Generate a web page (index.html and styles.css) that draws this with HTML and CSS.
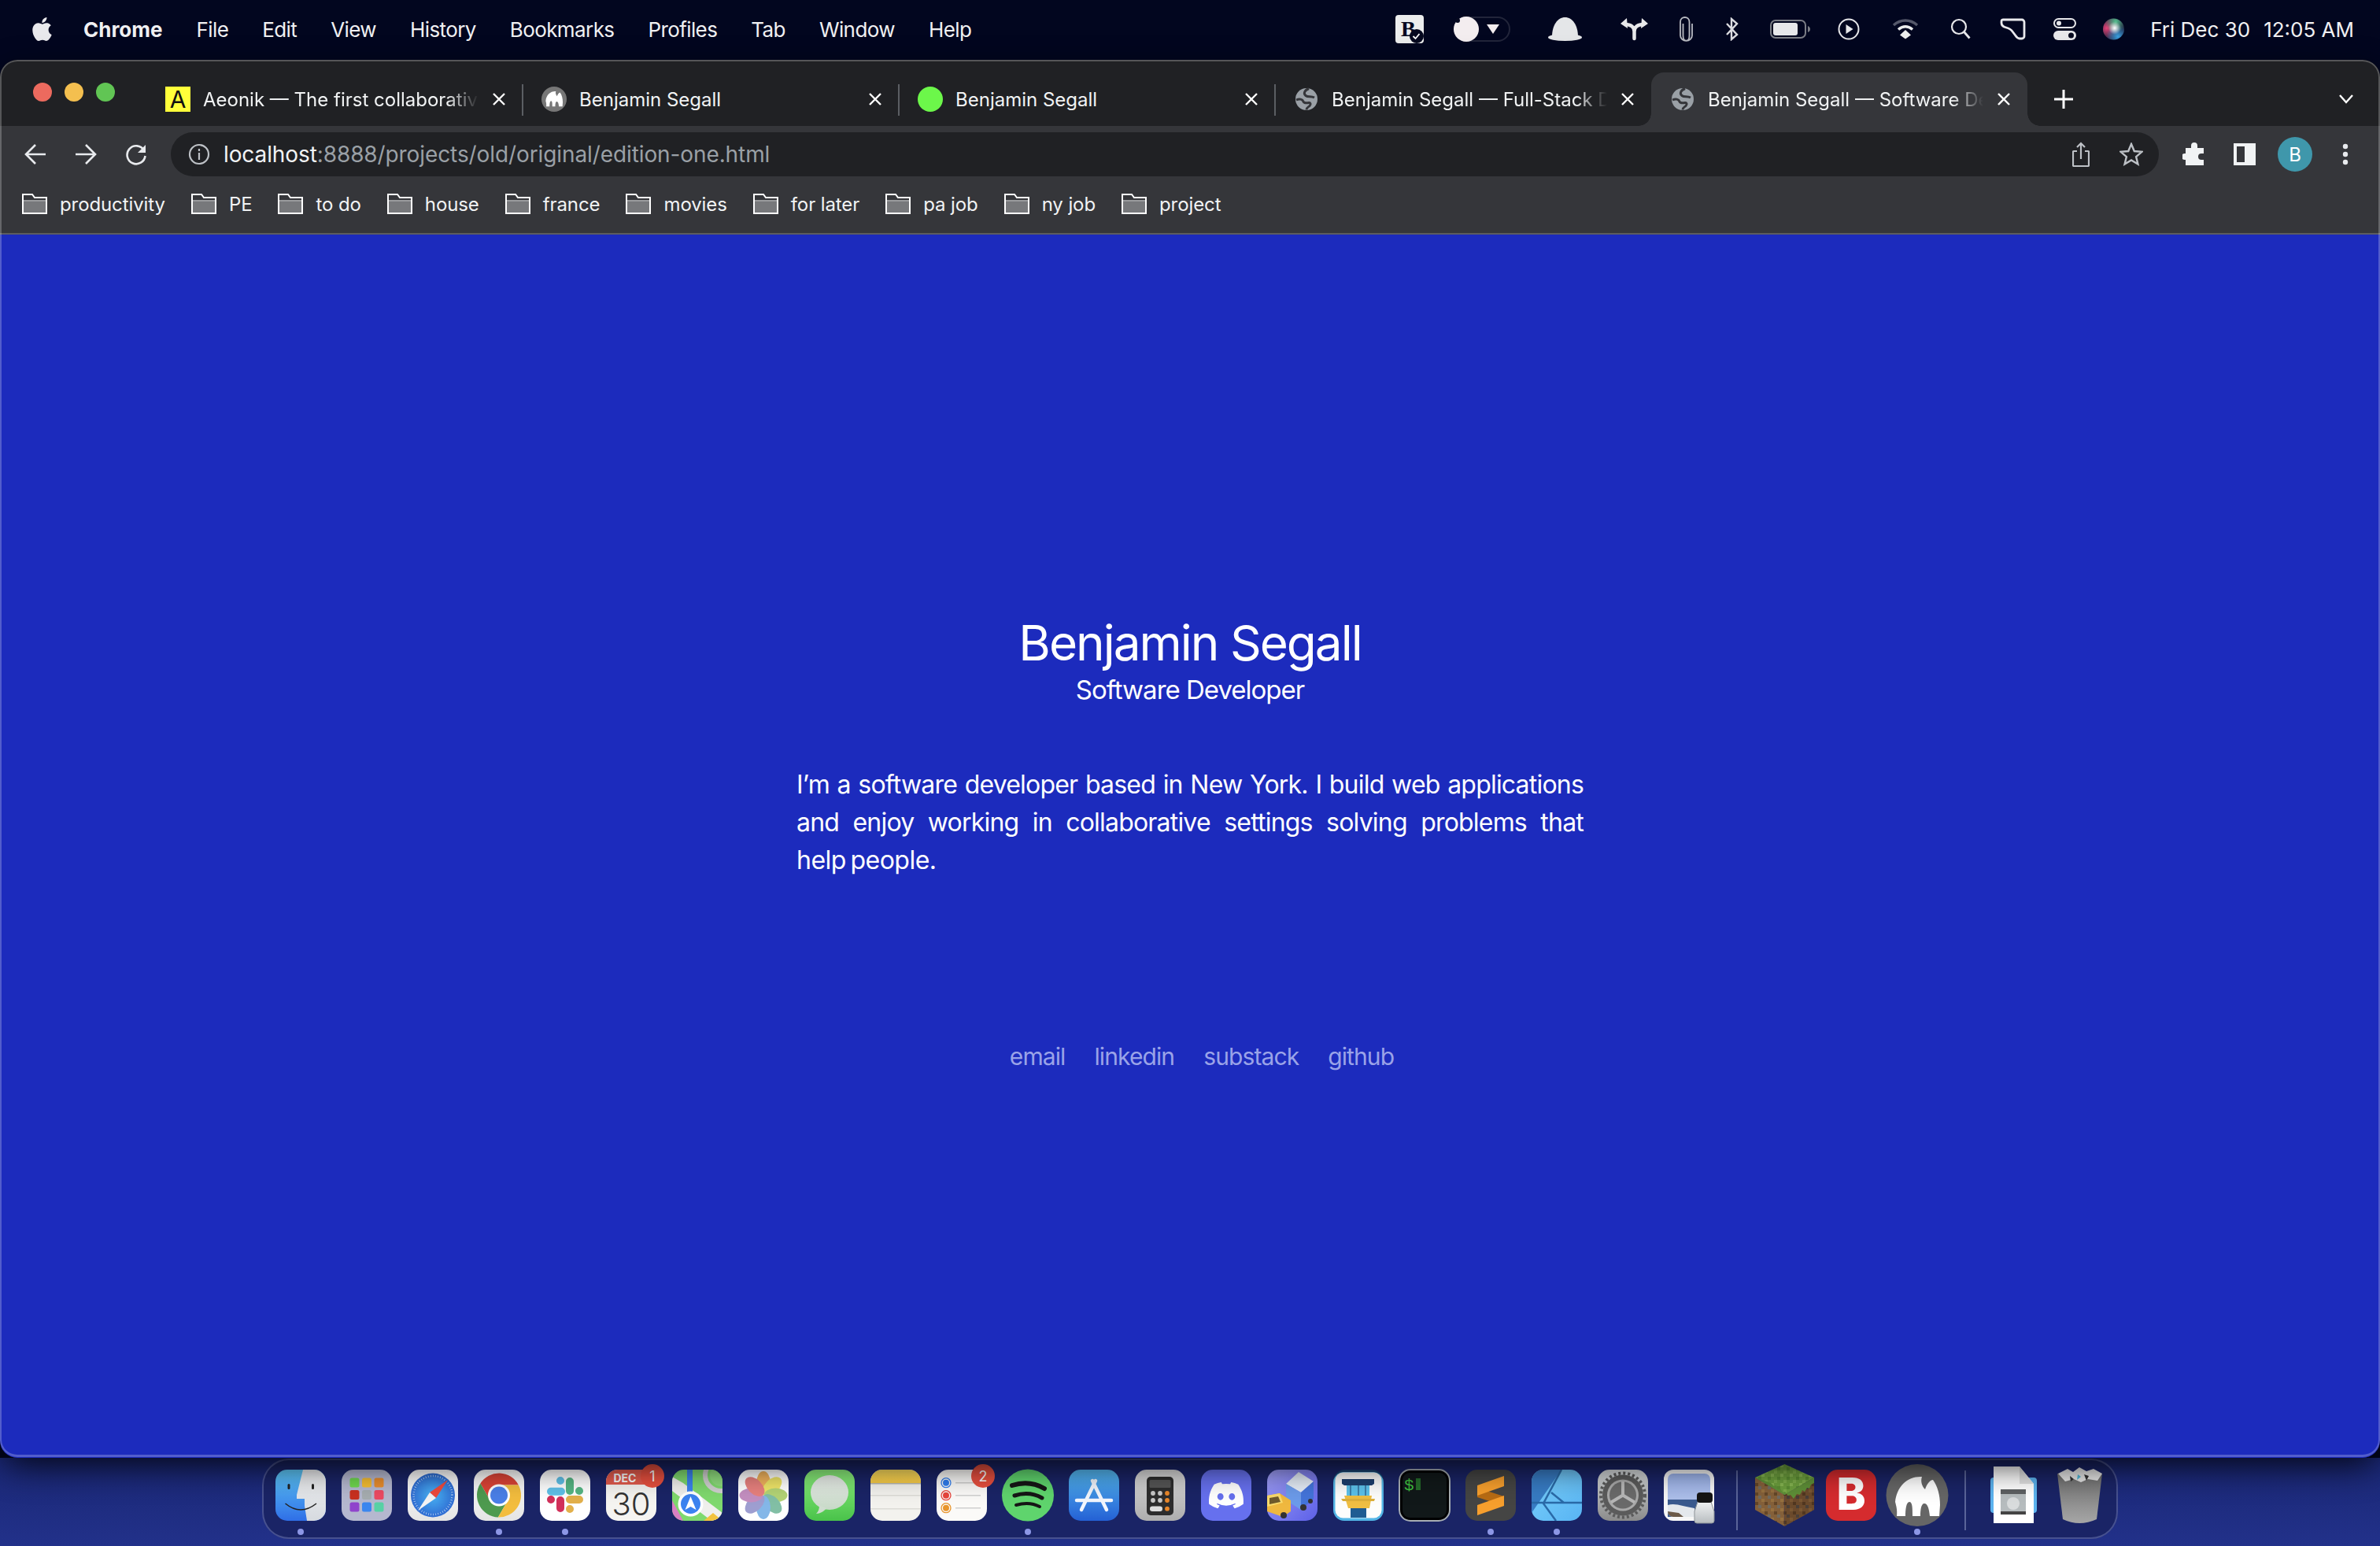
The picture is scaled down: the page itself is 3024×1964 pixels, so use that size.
FILE: index.html
```html
<!DOCTYPE html>
<html lang="en">
<head>
<meta charset="utf-8">
<title>Benjamin Segall — Software Developer</title>
<link rel="stylesheet" href="styles.css">
</head>
<body>
<svg class="defs" width="0" height="0" aria-hidden="true">
  <defs>
    <symbol id="folder" viewBox="0 0 32 26"><path d="M1 1h12l3 4h15v20H1z" fill="#35363a" stroke="#fff" stroke-width="2"/><rect x="2" y="10" width="28" height="14" fill="#77787b"/><path d="M2 9h28" stroke="#fff" stroke-width="1"/></symbol>
    <symbol id="close" viewBox="0 0 20 20"><path d="M3 3l14 14M17 3L3 17" stroke="#fff" stroke-width="2.4" fill="none"/></symbol>
    <symbol id="globe" viewBox="0 0 32 32"><circle cx="16" cy="16" r="14" fill="#9aa0a6"/><path d="M19 2.500C13 5 12 9 15 11.500c3 2.400 7 0 11 2.500M3 17c4-2 8-1 9 2 .8 2.500 4 2 7 1.500 2-.3 3 2 1 4-1.500 1.500-4 2-4 5" fill="none" stroke="#35363a" stroke-width="3"/></symbol>
    <symbol id="elephant" viewBox="0 0 84 84"><path d="M14 48C16 28 30 15 48 16c-2 6 0 12 4 16 2-6 6-12 10-12 6 8 9 20 9 32l-1 14H58c-1-10-3-16-7-16s-5 8-5 16H36c0-10 0-18-4-18s-5 10-5 18H16c1-8-1-14-2-18z" fill="#fff"/></symbol>
    <linearGradient id="gFinderL" x1="0" y1="0" x2="0" y2="1"><stop offset="0" stop-color="#5fcbfb"/><stop offset="1" stop-color="#2f6ee6"/></linearGradient>
    <linearGradient id="gFinderR" x1="0" y1="0" x2="0" y2="1"><stop offset="0" stop-color="#f1f2f4"/><stop offset="1" stop-color="#d6dadf"/></linearGradient>
    <linearGradient id="gSaf" x1="0" y1="0" x2="0" y2="1"><stop offset="0" stop-color="#fff"/><stop offset="1" stop-color="#e4e4e4"/></linearGradient>
    <radialGradient id="gSafB"><stop offset="0" stop-color="#49b4f5"/><stop offset="1" stop-color="#2f6cd2"/></radialGradient>
    <linearGradient id="gMsg" x1="0" y1="0" x2="0" y2="1"><stop offset="0" stop-color="#8ff27e"/><stop offset="1" stop-color="#49c24a"/></linearGradient>
    <linearGradient id="gBub" x1="0" y1="0" x2="0" y2="1"><stop offset="0" stop-color="#eef2ee"/><stop offset="1" stop-color="#c6d8c6"/></linearGradient>
    <linearGradient id="gNote" x1="0" y1="0" x2="0" y2="1"><stop offset="0" stop-color="#ffe060"/><stop offset="1" stop-color="#f9cb45"/></linearGradient>
    <linearGradient id="gApp" x1="0" y1="0" x2="0" y2="1"><stop offset="0" stop-color="#55baf3"/><stop offset="1" stop-color="#2460d4"/></linearGradient>
    <linearGradient id="gCalc" x1="0" y1="0" x2="0" y2="1"><stop offset="0" stop-color="#dcdcdc"/><stop offset="1" stop-color="#adadad"/></linearGradient>
    <linearGradient id="gTruck" x1="0" y1="0" x2="1" y2="1"><stop offset="0" stop-color="#a09ff6"/><stop offset="1" stop-color="#5c60e8"/></linearGradient>
    <linearGradient id="gAff" x1="0" y1="0" x2="1" y2="1"><stop offset="0" stop-color="#7bd0fb"/><stop offset="1" stop-color="#58b4f3"/></linearGradient>
    <linearGradient id="gSet" x1="0" y1="0" x2="0" y2="1"><stop offset="0" stop-color="#d8dcde"/><stop offset="1" stop-color="#8a8a8a"/></linearGradient>
    <linearGradient id="gTrash" x1="0" y1="0" x2="0" y2="1"><stop offset="0" stop-color="#6e6e6e"/><stop offset="1" stop-color="#a6a6a6"/></linearGradient>
    <linearGradient id="gSky" x1="0" y1="0" x2="0" y2="1"><stop offset="0" stop-color="#9bb2ea"/><stop offset="1" stop-color="#bac8ea"/></linearGradient>
    <linearGradient id="gGlass" x1="0" y1="0" x2="0" y2="1"><stop offset="0" stop-color="#f0f2f3"/><stop offset="1" stop-color="#b8bdc0"/></linearGradient>
    <radialGradient id="gSiriA" cx=".18" cy=".45" r=".6"><stop offset="0" stop-color="#e8447a"/><stop offset="1" stop-color="#b03a60" stop-opacity="0"/></radialGradient>
    <radialGradient id="gSiriB" cx=".7" cy=".85" r=".55"><stop offset="0" stop-color="#3aa0e0"/><stop offset="1" stop-color="#3aa0e0" stop-opacity="0"/></radialGradient>
    <radialGradient id="gSiriC" cx=".6" cy=".15" r=".5"><stop offset="0" stop-color="#58c090"/><stop offset="1" stop-color="#58c090" stop-opacity="0"/></radialGradient>
    <radialGradient id="gSiriD" cx=".55" cy=".45" r=".3"><stop offset="0" stop-color="#fff"/><stop offset="1" stop-color="#fff" stop-opacity="0"/></radialGradient>
    <pattern id="pGrass" width="12" height="12" patternUnits="userSpaceOnUse"><rect width="12" height="12" fill="#6d9f3e"/><rect width="4" height="4" fill="#86b552"/><rect x="8" y="4" width="4" height="4" fill="#5a8c33"/><rect x="4" y="8" width="4" height="4" fill="#7eae4b"/></pattern>
    <pattern id="pDirt" width="12" height="12" patternUnits="userSpaceOnUse"><rect width="12" height="12" fill="#84603a"/><rect x="4" width="4" height="4" fill="#644628"/><rect y="8" width="4" height="4" fill="#96703f"/><rect x="8" y="4" width="4" height="4" fill="#6f6a60"/></pattern>
    <pattern id="pDirt2" width="12" height="12" patternUnits="userSpaceOnUse"><rect width="12" height="12" fill="#6b4a2c"/><rect x="4" width="4" height="4" fill="#513720"/><rect y="8" width="4" height="4" fill="#7a5733"/><rect x="8" y="4" width="4" height="4" fill="#4a3f38"/></pattern>
    <clipPath id="cIcon"><rect x="10" y="7" width="64" height="65" rx="15"/></clipPath>
  </defs>
</svg>

<header class="menubar">
  <svg class="apple" viewBox="3 1.500 18 21" width="27" height="32"><path fill="#e9e9ec" d="M18.710 19.500c-.83 1.240-1.710 2.450-3.050 2.470-1.340.03-1.770-.79-3.290-.79-1.530 0-2 .77-3.270.82-1.310.05-2.300-1.320-3.140-2.530C4.250 17 2.940 12.450 4.700 9.390c.87-1.520 2.430-2.480 4.120-2.510 1.280-.02 2.500.87 3.290.87.78 0 2.260-1.070 3.810-.91.65.03 2.470.26 3.640 1.980-.09.06-2.170 1.280-2.150 3.810.03 3.020 2.650 4.030 2.680 4.040-.03.07-.42 1.440-1.380 2.830M13 3.500c.73-.83 1.940-1.460 2.940-1.500.13 1.170-.34 2.350-1.040 3.190-.69.85-1.830 1.510-2.950 1.420-.15-1.150.41-2.350 1.050-3.110z"/></svg>
  <nav class="menus">
    <span class="menu menu-app">Chrome</span><span class="menu">File</span><span class="menu">Edit</span><span class="menu">View</span><span class="menu">History</span><span class="menu">Bookmarks</span><span class="menu">Profiles</span><span class="menu">Tab</span><span class="menu">Window</span><span class="menu">Help</span>
  </nav>
  <div class="status">
    <svg width="36" height="36" viewBox="0 0 36 36"><rect width="36" height="36" rx="4" fill="#eceded"/><text x="7" y="27" class="st-b">B</text><circle cx="27" cy="27" r="9" fill="#06091f"/><path d="M22.500 27l3 3 5-6" stroke="#fff" stroke-width="1.800" fill="none"/></svg>
    <svg class="ml38" width="72" height="32" viewBox="0 0 72 32"><rect x="1" y="1" width="70" height="30" rx="15" fill="none" stroke="#22253a" stroke-width="2"/><circle cx="16" cy="16" r="16" fill="#f3edef"/><circle cx="5" cy="5" r="3" fill="#06091f"/><path d="M42 10h16l-8 12z" fill="#f3edef"/></svg>
    <svg class="ml48" width="43" height="30" viewBox="0 0 43 30"><ellipse cx="21.500" cy="25.500" rx="21.500" ry="4.500" fill="#e4e6e8"/><path d="M5 25C5 10 12 0 21.500 0S38 10 38 25z" fill="#e4e6e8"/></svg>
    <svg class="ml49" width="35" height="30" viewBox="0 0 35 30"><path d="M17.500 27V18C17.500 12 13 9 6 9M17.500 18C17.500 12 22 9 29 9" fill="none" stroke="#e8e8ea" stroke-width="4.500" stroke-linecap="round"/><path d="M0 8l8-7 1 13zM35 8l-8-7-1 13z" fill="#e8e8ea"/></svg>
    <svg class="ml39" width="19" height="32" viewBox="0 0 19 32"><path d="M5.500 9v15c0 9 8 9 8 0V7C13.500-1 2-1 2 7v17c0 9 15 9 15 0V9" fill="none" stroke="#b9bbc2" stroke-width="1.800"/></svg>
    <svg class="ml40" width="18" height="30" viewBox="0 0 18 30"><path d="M2 8l13 14-7 6V2l7 6L2 22" fill="none" stroke="#dcdce0" stroke-width="2.400"/></svg>
    <svg class="ml39" width="52" height="24" viewBox="0 0 52 24"><rect x="1" y="1" width="44" height="22" rx="6" fill="none" stroke="#7b7d85" stroke-width="2"/><rect x="4" y="4" width="31" height="16" rx="3" fill="#e7e7ea"/><path d="M48 8c2 1 3 2 3 4s-1 3-3 4z" fill="#7b7d85"/></svg>
    <svg class="ml34" width="28" height="28" viewBox="0 0 28 28"><circle cx="14" cy="14" r="12.500" fill="none" stroke="#e7e7ea" stroke-width="2"/><path d="M10.500 8l9 6-9 6z" fill="#e7e7ea"/></svg>
    <svg class="ml41" width="34" height="26" viewBox="0 0 34 26"><path d="M2 8c9-8 21-8 30 0" fill="none" stroke="#55586a" stroke-width="3.500"/><path d="M8 13.500c6-5 12-5 18 0" fill="none" stroke="#eceded" stroke-width="3.500"/><path d="M17 14l7 6.500-7 5-7-5z" fill="#eceded"/></svg>
    <svg class="ml40" width="26" height="28" viewBox="0 0 26 28"><circle cx="11" cy="11" r="9" fill="none" stroke="#e7e7ea" stroke-width="2.200"/><path d="M17.500 17.500l7 8" stroke="#e7e7ea" stroke-width="2.800"/></svg>
    <svg class="ml37" width="33" height="28" viewBox="0 0 33 28"><path d="M4 2H28a3 3 0 0 1 3 3V23a3 3 0 0 1-3 3H25C22 26 21 24 19 21L16 17C14 14 12 13 8 12 4 11 2 9 2 6 2 3 2 2 4 2Z" fill="none" stroke="#e9e9ec" stroke-width="2.800"/></svg>
    <svg class="ml35" width="29" height="28" viewBox="0 0 29 28"><rect x="1" y="1" width="27" height="11" rx="5.500" fill="none" stroke="#e7e7ea" stroke-width="2"/><circle cx="7" cy="6.500" r="3" fill="#e7e7ea"/><rect y="16" width="29" height="12" rx="6" fill="#e7e7ea"/><circle cx="22.500" cy="22" r="3.500" fill="#06091f"/></svg>
    <svg class="ml34" width="27" height="28" viewBox="0 0 27 28"><circle cx="13.500" cy="14" r="13.500" fill="#20203c"/><circle cx="13.500" cy="14" r="13.500" fill="url(#gSiriA)"/><circle cx="13.500" cy="14" r="13.500" fill="url(#gSiriB)"/><circle cx="13.500" cy="14" r="13.500" fill="url(#gSiriC)"/><circle cx="13.500" cy="14" r="13.500" fill="url(#gSiriD)"/></svg>
    <span class="clock">Fri Dec 30</span>
    <span class="clock clock-time">12:05 AM</span>
  </div>
</header>

<section class="window">
  <div class="tabstrip">
    <div class="lights"><i class="light red"></i><i class="light amber"></i><i class="light green"></i></div>
    <div class="tab sep">
      <span class="fav-a">A</span>
      <span class="tab-title fade">Aeonik — The first collaborative</span>
      <svg class="tab-x"><use href="#close"/></svg>
    </div>
    <div class="tab sep">
      <svg class="fav" viewBox="0 0 32 32"><circle cx="16" cy="16" r="16" fill="#777"/><use href="#elephant" width="32" height="32"/></svg>
      <span class="tab-title">Benjamin Segall</span>
      <svg class="tab-x"><use href="#close"/></svg>
    </div>
    <div class="tab sep">
      <svg class="fav" viewBox="0 0 32 32"><circle cx="16" cy="16" r="16" fill="#6cf74a"/></svg>
      <span class="tab-title">Benjamin Segall</span>
      <svg class="tab-x"><use href="#close"/></svg>
    </div>
    <div class="tab">
      <svg class="fav"><use href="#globe"/></svg>
      <span class="tab-title fade">Benjamin Segall — Full-Stack Developer</span>
      <svg class="tab-x"><use href="#close"/></svg>
    </div>
    <div class="tab active">
      <svg class="fav"><use href="#globe"/></svg>
      <span class="tab-title fade">Benjamin Segall — Software Developer</span>
      <svg class="tab-x"><use href="#close"/></svg>
    </div>
    <svg class="tab-new" width="26" height="26" viewBox="0 0 26 26"><path d="M13 1v24M1 13h24" stroke="#fff" stroke-width="3"/></svg>
    <svg class="tab-list" width="18" height="12" viewBox="0 0 18 12"><path d="M1 1l8 9 8-9" fill="none" stroke="#fff" stroke-width="2.400"/></svg>
  </div>

  <div class="toolbar">
    <button class="tool" type="button"><svg width="28" height="28" viewBox="0 0 28 28"><path d="M27 14H3M14 2L2 14l12 12" fill="none" stroke="#e8eaed" stroke-width="2.600"/></svg></button>
    <button class="tool" type="button"><svg width="28" height="28" viewBox="0 0 28 28"><path d="M1 14h24M14 2l12 12-12 12" fill="none" stroke="#e8eaed" stroke-width="2.600"/></svg></button>
    <button class="tool" type="button"><svg width="28" height="28" viewBox="0 0 28 28"><path d="M24 9A11.500 11.500 0 1 0 25.500 16" fill="none" stroke="#e8eaed" stroke-width="2.600"/><path d="M26 2v10H16z" fill="#e8eaed"/></svg></button>
    <div class="omnibox">
      <svg width="28" height="28" viewBox="0 0 28 28"><circle cx="14" cy="14" r="12" fill="none" stroke="#bdc1c6" stroke-width="2.200"/><path d="M14 12v9M14 7v3" stroke="#bdc1c6" stroke-width="2.200"/></svg>
      <span class="url"><b>localhost</b>:8888/projects/old/original/edition-one.html</span>
      <svg class="omni-share" width="22" height="32" viewBox="0 0 22 32"><path d="M6 12H2a1 1 0 0 0-1 1v17a1 1 0 0 0 1 1h18a1 1 0 0 0 1-1V13a1 1 0 0 0-1-1h-4M11 22V2M6 7l5-5 5 5" fill="none" stroke="#bdc1c6" stroke-width="2.200"/></svg>
      <svg class="omni-star" width="30" height="30" viewBox="0 0 30 30"><path d="M15 2l3.800 9 9.700.8-7.400 6.300 2.300 9.400L15 22.500 6.600 27.500l2.300-9.400L1.500 11.800l9.700-.8z" fill="none" stroke="#bdc1c6" stroke-width="2.400"/></svg>
    </div>
    <div class="tools-right">
      <button class="tool" type="button"><svg width="30" height="30" viewBox="0 0 30 30"><path d="M11 4a4 4 0 0 1 8 0v3h8v7h-3a4 4 0 0 0 0 8h3v7H4v-7h-1a4 4 0 0 1 0-8h1V7h7z" fill="#f1f3f4"/></svg></button>
      <button class="tool" type="button"><svg width="28" height="28" viewBox="0 0 28 28"><path fill-rule="evenodd" d="M0 0h28v28H0zM4 4v20h10V4z" fill="#f1f3f4"/></svg></button>
      <button class="tool" type="button"><span class="avatar">B</span></button>
      <button class="tool" type="button"><svg width="8" height="28" viewBox="0 0 8 28"><circle cx="4" cy="4" r="3.200" fill="#e8eaed"/><circle cx="4" cy="14" r="3.200" fill="#e8eaed"/><circle cx="4" cy="24" r="3.200" fill="#e8eaed"/></svg></button>
    </div>
  </div>

  <div class="bookmarks">
    <span class="mark"><svg class="folder"><use href="#folder"/></svg>productivity</span>
    <span class="mark"><svg class="folder"><use href="#folder"/></svg>PE</span>
    <span class="mark"><svg class="folder"><use href="#folder"/></svg>to do</span>
    <span class="mark"><svg class="folder"><use href="#folder"/></svg>house</span>
    <span class="mark"><svg class="folder"><use href="#folder"/></svg>france</span>
    <span class="mark"><svg class="folder"><use href="#folder"/></svg>movies</span>
    <span class="mark"><svg class="folder"><use href="#folder"/></svg>for later</span>
    <span class="mark"><svg class="folder"><use href="#folder"/></svg>pa job</span>
    <span class="mark"><svg class="folder"><use href="#folder"/></svg>ny job</span>
    <span class="mark"><svg class="folder"><use href="#folder"/></svg>project</span>
  </div>

  <main class="page">
    <h1 class="name">Benjamin Segall</h1>
    <p class="role">Software Developer</p>
    <p class="bio"><span class="bio-line">I’m a software developer based in New York. I build web applications</span> <span class="bio-line">and enjoy working in collaborative settings solving problems that</span> <span class="bio-end">help people.</span></p>
    <nav class="links">
      <a class="link" href="#">email</a>
      <a class="link" href="#">linkedin</a>
      <a class="link" href="#">substack</a>
      <a class="link" href="#">github</a>
    </nav>
  </main>
</section>

<footer class="desk">
  <div class="dock">
    <div class="app running"><svg viewBox="0 0 84 84"><g clip-path="url(#cIcon)"><rect x="10" y="7" width="64" height="65" fill="url(#gFinderL)"/><path d="M45 7L37 39v5h10v9l3 19h24V7z" fill="url(#gFinderR)"/></g><rect x="25.500" y="25" width="3" height="7" rx="1.500" fill="#222"/><rect x="56" y="25" width="3" height="7" rx="1.500" fill="#222"/><path d="M22.500 50Q42 66 62 50" fill="none" stroke="#222" stroke-width="1.500"/></svg><i class="dot"></i></div>

    <div class="app"><svg viewBox="0 0 84 84"><rect x="10" y="7" width="64" height="65" rx="15" fill="#b5b8cf"/><g class="pad"><rect x="20.500" y="17.500" width="12" height="12" rx="2.500" fill="#6fd84f"/><rect x="36" y="17.500" width="12" height="12" rx="2.500" fill="#f5bd33"/><rect x="51.500" y="17.500" width="12" height="12" rx="2.500" fill="#e98d2d"/><rect x="20.500" y="33" width="12" height="12" rx="2.500" fill="#c9301f"/><rect x="36" y="33" width="12" height="12" rx="2.500" fill="#a6adb0"/><rect x="51.500" y="33" width="12" height="12" rx="2.500" fill="#ec4a63"/><rect x="20.500" y="48.500" width="12" height="12" rx="2.500" fill="#9044cc"/><rect x="36" y="48.500" width="12" height="12" rx="2.500" fill="#3b86ef"/><rect x="51.500" y="48.500" width="12" height="12" rx="2.500" fill="#57d1a5"/></g></svg></div>

    <div class="app"><svg viewBox="0 0 84 84"><rect x="10" y="7" width="64" height="65" rx="15" fill="url(#gSaf)"/><circle cx="42" cy="39.500" r="28" fill="url(#gSafB)"/><circle cx="42" cy="39.500" r="24.500" fill="none" stroke="#fff" stroke-width="2.500" stroke-dasharray=".6 2.500" opacity=".85"/><path d="M61 20L46 43l-8-7z" fill="#ef4a3c"/><path d="M23 59l15-23 8 7z" fill="#f4f4f4"/></svg></div>

    <div class="app running"><svg viewBox="0 0 84 84"><rect x="10" y="7" width="64" height="65" rx="15" fill="url(#gSaf)"/><path d="M66.800 26.500A28 28 0 0 0 18.340 24.520L30.740 46 42 26.500z" fill="#dc4437"/><path d="M40.860 67.480A28 28 0 0 1 18.340 24.520L30.740 46H53.260z" fill="#4e9a4f"/><path d="M66.800 26.500A28 28 0 0 1 40.860 67.480L53.260 46 42 26.500z" fill="#f3bd3e"/><circle cx="42" cy="39.500" r="14" fill="#fff"/><circle cx="42" cy="39.500" r="11" fill="#4a7fe8"/></svg><i class="dot"></i></div>

    <div class="app running"><svg viewBox="0 0 84 84"><rect x="10" y="7" width="64" height="65" rx="15" fill="#fff"/><g fill="none" stroke-linecap="round" stroke-width="10"><path d="M36 21h.01M24 34.700h13" stroke="#5fc0e8"/><path d="M48 22v12M60 34h.01" stroke="#55b583"/><path d="M24 45h.01M36 46v10" stroke="#d2305a"/><path d="M48 45h12M48 57h.01" stroke="#e3b04b"/></g></svg><i class="dot"></i></div>

    <div class="app"><svg viewBox="0 0 84 84"><rect x="10" y="7" width="64" height="65" rx="15" fill="#f5f4f1"/><g clip-path="url(#cIcon)"><rect x="10" y="7" width="64" height="19" fill="#e35b4d"/></g><text x="34" y="23" class="cal-m">DEC</text><text x="42" y="65" class="cal-d">30</text></svg><span class="badge">1</span></div>

    <div class="app"><svg viewBox="0 0 84 84"><g clip-path="url(#cIcon)"><rect x="10" y="7" width="64" height="65" fill="#7fd96e"/><path d="M10 34l50 38h14V62L24 24 10 16z" fill="#efefec"/><path d="M10 46l14 26H10z" fill="#d97fc3"/><path d="M50 72l12-10 12 10z" fill="#f2c33e"/><rect x="29" y="7" width="7" height="40" fill="#3b82f0"/><circle cx="72" cy="14" r="20" fill="none" stroke="#cfcfcf" stroke-width="6"/><circle cx="72" cy="14" r="14" fill="#8fdc7e"/></g><circle cx="33.500" cy="50.500" r="16" fill="#fff"/><circle cx="33.500" cy="50.500" r="12.500" fill="#3b82f0"/><path d="M33.500 41l7 17-7-4-7 4z" fill="#fff"/></svg></div>

    <div class="app"><svg viewBox="0 0 84 84"><rect x="10" y="7" width="64" height="65" rx="15" fill="#fff"/><g opacity=".78"><ellipse cx="42" cy="24" rx="9" ry="15" fill="#f0a030"/><ellipse cx="42" cy="24" rx="9" ry="15" fill="#ece040" transform="rotate(45 42 39.500)"/><ellipse cx="42" cy="24" rx="9" ry="15" fill="#a0c850" transform="rotate(90 42 39.500)"/><ellipse cx="42" cy="24" rx="9" ry="15" fill="#5fae8c" transform="rotate(135 42 39.500)"/><ellipse cx="42" cy="24" rx="9" ry="15" fill="#62a4e2" transform="rotate(180 42 39.500)"/><ellipse cx="42" cy="24" rx="9" ry="15" fill="#8484c4" transform="rotate(225 42 39.500)"/><ellipse cx="42" cy="24" rx="9" ry="15" fill="#b470b0" transform="rotate(270 42 39.500)"/><ellipse cx="42" cy="24" rx="9" ry="15" fill="#e25e5a" transform="rotate(315 42 39.500)"/></g></svg></div>

    <div class="app"><svg viewBox="0 0 84 84"><rect x="10" y="7" width="64" height="65" rx="15" fill="url(#gMsg)"/><ellipse cx="42" cy="36" rx="24" ry="22" fill="url(#gBub)"/><path d="M29 52c0 5-1 8-4 11 5 0 10-3 13-7z" fill="#cfdccf"/></svg></div>

    <div class="app"><svg viewBox="0 0 84 84"><rect x="10" y="7" width="64" height="65" rx="15" fill="#f3f2ee"/><g clip-path="url(#cIcon)"><rect x="10" y="7" width="64" height="17" fill="url(#gNote)"/><rect x="10" y="24" width="64" height="1.500" fill="#b8b8b0"/><rect x="10" y="39" width="64" height="1.500" fill="#dcdbd6"/><rect x="10" y="56" width="64" height="1.500" fill="#dcdbd6"/></g></svg></div>

    <div class="app"><svg viewBox="0 0 84 84"><rect x="10" y="7" width="64" height="65" rx="15" fill="#fbfaf8"/><g fill="none" stroke-width="1.300"><circle cx="22" cy="23.700" r="6" stroke="#2f7ef0"/><circle cx="22" cy="39.700" r="6" stroke="#e8453c"/><circle cx="22" cy="55.700" r="6" stroke="#e8952c"/></g><circle cx="22" cy="23.700" r="4" fill="#2f7ef0"/><circle cx="22" cy="39.700" r="4" fill="#e8453c"/><circle cx="22" cy="55.700" r="4" fill="#e8952c"/><path d="M34 23.700h32M34 39.700h32M34 55.700h32" stroke="#cfcfcf" stroke-width="1.500"/></svg><span class="badge">2</span></div>

    <div class="app running"><svg viewBox="0 0 84 84"><circle cx="42" cy="39.500" r="33" fill="#5fd46d"/><g fill="none" stroke="#161616" stroke-linecap="round"><path d="M22 27Q44 20 63 31" stroke-width="6"/><path d="M25 40Q44 34 60 43" stroke-width="5"/><path d="M27 52Q44 47 57 54" stroke-width="4"/></g></svg><i class="dot"></i></div>

    <div class="app"><svg viewBox="0 0 84 84"><rect x="10" y="7" width="64" height="65" rx="15" fill="url(#gApp)"/><path d="M44 21L26 58M40 21l18 37M20 46h44" fill="none" stroke="#f2f6fd" stroke-width="4.500" stroke-linecap="round"/></svg></div>

    <div class="app"><svg viewBox="0 0 84 84"><rect x="10" y="7" width="64" height="65" rx="15" fill="url(#gCalc)"/><rect x="25" y="16" width="34" height="49" rx="5" fill="#2d2d2d"/><rect x="28.500" y="20" width="27" height="10" rx="1.500" fill="#555"/><g fill="#c8c8c8"><circle cx="33" cy="37" r="2.900"/><circle cx="42" cy="37" r="2.900"/><circle cx="33" cy="46" r="2.900"/><circle cx="42" cy="46" r="2.900"/><rect x="29" y="53.500" width="16" height="6.500" rx="3.200" fill="#ddd"/></g><g fill="#e9872a"><circle cx="51" cy="37" r="2.900"/><circle cx="51" cy="46" r="2.900"/><circle cx="51" cy="56.700" r="2.900"/></g></svg></div>

    <div class="app"><svg viewBox="0 0 84 84"><rect x="10" y="7" width="64" height="65" rx="15" fill="#6670ee"/><path transform="translate(20 23) scale(.346)" fill="#fff" d="M107.700,8.070A105.150,105.150,0,0,0,81.470,0a72.060,72.060,0,0,0-3.360,6.830A97.680,97.680,0,0,0,49,6.830,72.370,72.370,0,0,0,45.640,0,105.890,105.890,0,0,0,19.390,8.090C2.790,32.650-1.710,56.600.54,80.210h0A105.730,105.730,0,0,0,32.710,96.360,77.700,77.700,0,0,0,39.600,85.250a68.420,68.420,0,0,1-10.850-5.180c.91-.66,1.800-1.340,2.660-2a75.570,75.570,0,0,0,64.320,0c.87.71,1.760,1.390,2.660,2a68.680,68.680,0,0,1-10.870,5.190,77,77,0,0,0,6.890,11.100A105.250,105.250,0,0,0,126.600,80.220h0C129.240,52.840,122.090,29.110,107.700,8.070ZM42.450,65.690C36.180,65.690,31,60,31,53s5-12.740,11.430-12.740S54,46,53.890,53,48.840,65.690,42.450,65.690Zm42.240,0C78.410,65.690,73.250,60,73.250,53s5-12.740,11.440-12.740S96.230,46,96.120,53,91.080,65.690,84.690,65.690Z"/></svg></div>

    <div class="app"><svg viewBox="0 0 84 84"><rect x="10" y="7" width="64" height="65" rx="15" fill="url(#gTruck)"/><path d="M50 10l19 12-16 14-19-11z" fill="#e4ecf6"/><path d="M34 25l19 11v22L34 46z" fill="#6c9bea"/><path d="M53 36l16-14v22L53 58z" fill="#4474da"/><path d="M10 40l16-3 14 9v14l-10 7-20-7z" fill="#efb83f"/><path d="M10 40l16-3 4 12-20 5z" fill="#f9da6c"/><path d="M13 43l11-2 3 7-14 3z" fill="#6e5a2c"/><circle cx="31" cy="65" r="4" fill="#333"/><circle cx="56" cy="55" r="4" fill="#333"/><circle cx="65" cy="47" r="3" fill="#333"/></svg></div>

    <div class="app"><svg viewBox="0 0 84 84"><rect x="10" y="7" width="64" height="65" rx="15" fill="#19426e"/><rect x="10" y="10" width="64" height="62" rx="14" fill="#53b5e6"/><rect x="12.500" y="10.500" width="59" height="58" rx="10" fill="#fdfdfc"/><path d="M21 19h41v6l-3 2H24l-3-2z" fill="#1d3f6e"/><path d="M27 27h29v13H27z" fill="#5cc1ea"/><path d="M32 27v13M42 27v13M51 27v13" stroke="#1d3f6e"/><path d="M24 40h35l-3 16H29z" fill="#efbe43"/><path d="M20 44h43l-1 3H22z" fill="#ddb03a"/><path d="M32 56h20v12H32z" fill="#1f5c92"/></svg></div>

    <div class="app"><svg viewBox="0 0 84 84"><rect x="10" y="7" width="64" height="65" rx="14" fill="#000" stroke="#a7aeb4" stroke-width="2"/><rect x="14" y="11" width="56" height="57" rx="9" fill="#111819"/><text x="16" y="33" class="term">$</text><rect x="31" y="18" width="6" height="15" fill="#256b2a"/></svg></div>

    <div class="app running"><svg viewBox="0 0 84 84"><rect x="10" y="7" width="64" height="65" rx="15" fill="#454544"/><path d="M25 30l34 11v12L25 42z" fill="#b86c14"/><path d="M25 27l34-12v13L25 40z" fill="#f79f2d"/><path d="M25 52l34-12v13L25 65z" fill="#f79f2d"/></svg><i class="dot"></i></div>

    <div class="app running"><svg viewBox="0 0 84 84"><g clip-path="url(#cIcon)"><rect x="10" y="7" width="64" height="65" fill="url(#gAff)"/><path d="M10 7h38L10 62z" fill="#377bc3"/><path d="M48 7L25 50l16 22M35 36l16 13M10 49h64" fill="none" stroke="#2a6aa8" stroke-width="2.500"/></g></svg><i class="dot"></i></div>

    <div class="app"><svg viewBox="0 0 84 84"><rect x="10" y="7" width="64" height="65" rx="15" fill="url(#gSet)"/><circle cx="42" cy="39.500" r="26" fill="#5b5b5b"/><circle cx="42" cy="39.500" r="28" fill="none" stroke="#5b5b5b" stroke-width="4" stroke-dasharray="3 3"/><circle cx="42" cy="39.500" r="20" fill="#a9a9a9"/><circle cx="42" cy="39.500" r="17" fill="#6a6a6a"/><path d="M42 39.500V22M42 39.500L27 48.500M42 39.500L57 48.500" stroke="#b7b7b7" stroke-width="4"/></svg></div>

    <div class="app"><svg viewBox="0 0 84 84"><rect x="10" y="7" width="64" height="65" rx="12" fill="#f6f6f6"/><rect x="15" y="12" width="54" height="55" rx="7" fill="url(#gSky)"/><path d="M15 45h54v22H15z" fill="#3a5a8e"/><path d="M15 52c10-3 20 2 34 4v11H22a7 7 0 0 1-7-7z" fill="#e4e8ec"/><path d="M15 60l14 2 6 5H22a7 7 0 0 1-7-7z" fill="#6b5a48"/><path d="M53 48h17l4 12v12a3 3 0 0 1-3 3H52a3 3 0 0 1-3-3V60z" fill="url(#gGlass)" stroke="#8d9397"/><rect x="52" y="36" width="20" height="13" rx="4" fill="#151515"/></svg></div>

    <i class="divider"></i>

    <div class="app"><svg viewBox="0 0 84 84"><path d="M4 17l37.500 22v40L4 58z" fill="url(#pDirt)"/><path d="M79 17L41.500 39v40L79 58z" fill="url(#pDirt2)"/><path d="M41.500 0L79 17 41.500 39 4 17z" fill="url(#pGrass)"/><path d="M4 17l37.500 22 37.500-22v7l-4 2-2 5-3-1-3 5-3-2-3 6-4-1-4 6-4-5-3 1-4-5-3 1-3-5-3 1-2-5-3 1-4-4z" fill="#5e8f37"/></svg></div>

    <div class="app"><svg viewBox="0 0 84 84"><rect x="10" y="7" width="64" height="65" rx="15" fill="#d52b2e"/><text x="42" y="58" class="bear">B</text></svg></div>

    <div class="app running"><svg viewBox="0 0 84 84"><ellipse cx="42" cy="39.500" rx="39.500" ry="39.500" fill="#666"/><use href="#elephant" width="84" height="84"/></svg><i class="dot"></i></div>

    <i class="divider"></i>

    <div class="app"><svg viewBox="0 0 84 84"><rect x="13" y="17" width="59" height="45" rx="4" fill="#5cb3ef"/><path d="M17 3h33l18 22v50H17z" fill="#fff"/><path d="M50 3l18 22H50z" fill="#e3e3e3"/><rect x="26" y="32" width="32" height="32" rx="2" fill="#b6bcbe"/><rect x="26" y="32" width="32" height="6" fill="#5d6062"/><circle cx="42" cy="50" r="8" fill="#d9dcdd"/><rect x="26" y="60" width="32" height="4" fill="#444"/></svg></div>

    <div class="app"><svg viewBox="0 0 84 84"><path d="M14 12h57l-7 58q-22 10-43 0z" fill="url(#gTrash)"/><path d="M15 12l12-6 7 4 8-6 9 5 9-3 11 6-6 9-12-2-9 4-9-4-11 3z" fill="#e8e8e8"/><path d="M30 15l5 4-4 3zM48 13l6 2-3 6z" fill="#333"/><path d="M40 13l4 3-5 4z" fill="#52b8d8"/></svg></div>
  </div>
</footer>
</body>
</html>
```

FILE: styles.css
```css
* { box-sizing: border-box; }
html, body { margin: 0; padding: 0; }
body {
  width: 3024px;
  height: 1964px;
  overflow: hidden;
  display: flex;
  flex-direction: column;
  background: #02061f;
  font-family: "Inter", "Liberation Sans", sans-serif;
  color: #fff;
}
.defs { position: absolute; }

/* menu bar */
.menubar {
  height: 76px;
  flex: none;
  display: flex;
  align-items: center;
  padding: 0 33px 2px 40px;
  background: #02061f;
  color: #f0f0f2;
  font-size: 26px;
}
.apple { flex: none; }
.menus { display: flex; gap: 43px; margin-left: 39px; letter-spacing: -.6px; }
.menu-app { font-weight: 700; letter-spacing: 0; }
.status { display: flex; align-items: center; margin-left: auto; }
.ml34 { margin-left: 34px; }
.ml35 { margin-left: 35px; }
.ml37 { margin-left: 37px; }
.ml38 { margin-left: 38px; }
.ml39 { margin-left: 39px; }
.ml40 { margin-left: 40px; }
.ml41 { margin-left: 41px; }
.ml48 { margin-left: 48px; }
.ml49 { margin-left: 49px; }
.clock { margin-left: 33px; }
.clock-time { margin-left: 17px; }
.st-b { font: 700 28px "Liberation Serif", serif; fill: #06091f; }

/* window */
.window {
  position: relative;
  z-index: 1;
  height: 1776px;
  flex: none;
  display: flex;
  flex-direction: column;
  border-radius: 22px;
  overflow: hidden;
  background: #202124;
  box-shadow: 0 14px 44px -6px rgba(0, 0, 0, .85);
}
.window::after {
  content: "";
  position: absolute;
  inset: 0 0 1px;
  border: 2px solid rgba(255, 255, 255, .24);
  border-bottom-width: 3px;
  border-radius: 22px;
  pointer-events: none;
}

/* tabs */
.tabstrip {
  height: 84px;
  flex: none;
  display: flex;
  align-items: flex-end;
  background: #202124;
}
.lights {
  width: 186px;
  height: 84px;
  flex: none;
  display: flex;
  align-items: center;
  gap: 16px;
  padding: 0 0 2px 42px;
}
.light { width: 24px; height: 24px; border-radius: 50%; }
.red { background: #ec6a5e; }
.amber { background: #f4bf4f; }
.green { background: #61c554; }
.tab {
  position: relative;
  width: 478px;
  height: 68px;
  flex: none;
  display: flex;
  align-items: center;
  padding: 0 20px 0 24px;
  font-size: 24px;
  color: #f1f3f4;
  border-radius: 16px 16px 0 0;
}
.sep::after {
  content: "";
  position: absolute;
  right: -1px;
  top: 15px;
  height: 40px;
  width: 2px;
  background: #5b5e63;
}
.active { background: #35363a; }
.active::before, .active::after {
  content: "";
  position: absolute;
  bottom: 0;
  width: 16px;
  height: 16px;
}
.active::before { left: -16px; background: radial-gradient(circle at 0 0, transparent 15.500px, #35363a 16px); }
.active::after { right: -16px; background: radial-gradient(circle at 100% 0, transparent 15.500px, #35363a 16px); }
.fav, .fav-a { width: 32px; height: 32px; flex: none; }
.fav-a {
  display: flex;
  align-items: center;
  justify-content: center;
  background: #ffff3a;
  color: #111;
  font-size: 30px;
}
.tab-title {
  flex: 1;
  min-width: 0;
  margin: 0 12px 0 16px;
  overflow: hidden;
  white-space: nowrap;
}
.fade {
  -webkit-mask-image: linear-gradient(to right, #000 calc(100% - 44px), transparent calc(100% - 4px));
  mask-image: linear-gradient(to right, #000 calc(100% - 44px), transparent calc(100% - 4px));
}
.tab-x { width: 20px; height: 20px; flex: none; }
.tab-new { margin: 0 0 21px 33px; flex: none; }
.tab-list { margin: 0 0 28px 337px; flex: none; }

/* toolbar */
.toolbar {
  height: 64px;
  flex: none;
  display: flex;
  align-items: flex-end;
  padding: 0 12px 0 13px;
  background: #35363a;
}
.tool {
  width: 64px;
  height: 56px;
  flex: none;
  display: flex;
  align-items: center;
  justify-content: center;
  padding: 0;
  border: 0;
  background: none;
}
.omnibox {
  flex: 1;
  height: 56px;
  margin-left: 12px;
  display: flex;
  align-items: center;
  padding: 0 20px 0 22px;
  border-radius: 28px;
  background: #202124;
  font-size: 28px;
}
.url { margin-left: 17px; color: #9aa0a6; letter-spacing: -.1px; }
.url b { font-weight: 400; color: #f1f3f4; }
.omni-share { margin-left: auto; }
.omni-star { margin-left: 38px; }
.tools-right { display: flex; margin-left: 13px; }
.avatar {
  width: 44px;
  height: 44px;
  display: flex;
  align-items: center;
  justify-content: center;
  border-radius: 50%;
  background: #3f97ab;
  color: #fff;
  font: 24px "Inter", sans-serif;
}

/* bookmarks */
.bookmarks {
  height: 74px;
  flex: none;
  display: flex;
  align-items: center;
  gap: 33px;
  padding: 0 0 2px 28px;
  background: #35363a;
  border-bottom: 2px solid #5b5c60;
  font-size: 24px;
  letter-spacing: -.1px;
  color: #f1f3f4;
}
.mark { display: flex; align-items: center; gap: 16px; }
.folder { width: 32px; height: 26px; flex: none; }

/* page */
.page {
  flex: 1;
  display: flex;
  flex-direction: column;
  align-items: center;
  padding-top: 483px;
  background: #1c2bbd;
}
.name {
  margin: 0;
  font-size: 62px;
  line-height: 72px;
  font-weight: 400;
  letter-spacing: -2px;
}
.role {
  margin: 3px 0 0;
  font-size: 33px;
  line-height: 40px;
  letter-spacing: -1px;
}
.bio {
  width: 1000px;
  margin: 77px 0 0;
  font-size: 32px;
  line-height: 48px;
  letter-spacing: -.8px;
}
.bio-line {
  display: block;
  text-align: justify;
  text-align-last: justify;
}
.bio-end { display: block; letter-spacing: -.5px; word-spacing: -3px; }
.links {
  display: flex;
  gap: 37px;
  margin-top: 205px;
  padding-left: 30px;
  font-size: 30px;
  line-height: 40px;
  letter-spacing: -.9px;
}
.link { color: #9aa3e8; text-decoration: none; }

/* dock */
.desk {
  flex: 1;
  display: flex;
  justify-content: center;
  padding-top: 1px;
  background: linear-gradient(#1a2775, #22318a);
}
.dock {
  height: 102px;
  display: flex;
  padding: 5px 5px 0;
  border: 2px solid rgba(140, 150, 205, .4);
  border-radius: 34px;
  background: #1a2466;
}
.app {
  position: relative;
  width: 84px;
  flex: none;
  display: flex;
  flex-direction: column;
  align-items: center;
}
.app svg { width: 84px; height: 84px; flex: none; }
.dot {
  width: 8px;
  height: 8px;
  margin-top: -2px;
  border-radius: 50%;
  background: #8d97e6;
}
.badge {
  position: absolute;
  top: 0;
  right: 0;
  width: 30px;
  height: 30px;
  display: flex;
  align-items: center;
  justify-content: center;
  border-radius: 50%;
  background: #e8503f;
  color: #fff;
  font-size: 18px;
}
.divider {
  width: 2px;
  height: 76px;
  margin: 8px 18px 0;
  flex: none;
  background: #5a6499;
}
.cal-m { font: 700 14px "Inter", sans-serif; fill: #fff; text-anchor: middle; }
.cal-d { font: 300 40px "Inter", sans-serif; fill: #333; text-anchor: middle; }
.term { font: 400 21px "Liberation Mono", monospace; fill: #3fbf3f; }
.bear { font: 800 56px "Inter", sans-serif; fill: #fff; text-anchor: middle; }
```
